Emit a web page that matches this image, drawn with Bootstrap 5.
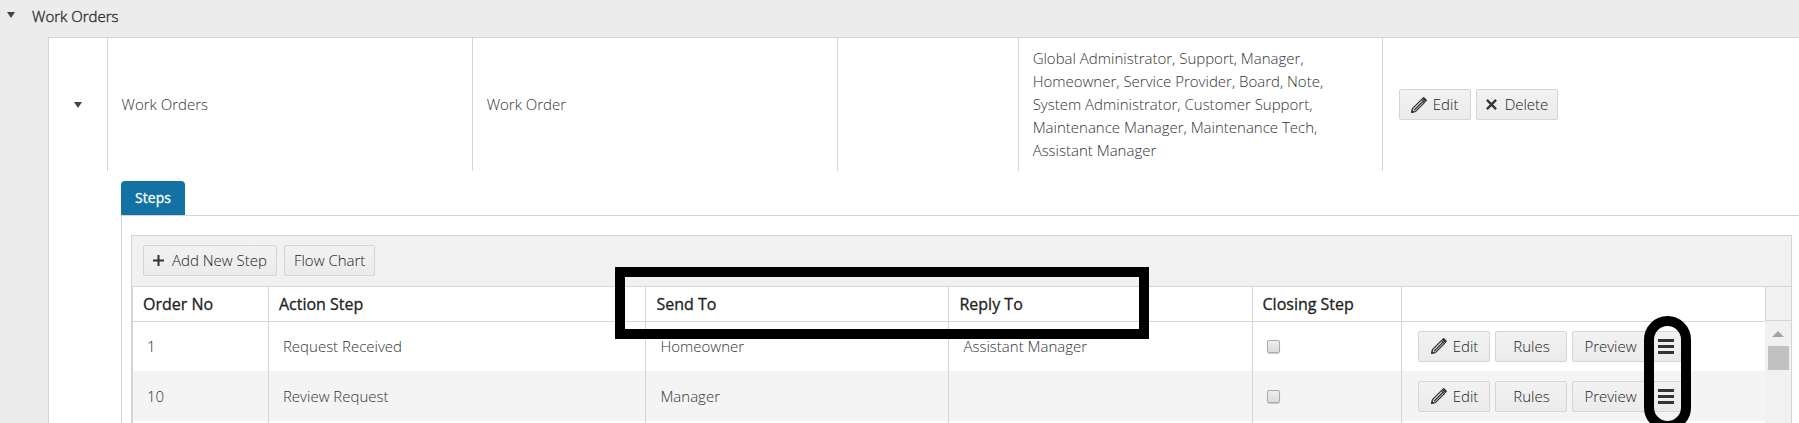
<!DOCTYPE html>
<html lang="en">
<head>
<meta charset="utf-8">
<meta name="viewport" content="width=device-width, initial-scale=1">
<title>Work Orders</title>
<link href="https://cdn.jsdelivr.net/npm/bootstrap@5.3.0/dist/css/bootstrap.min.css" rel="stylesheet">
<style>
  :root { --line: #d5d5d5; }
  body { font-family: "Open Sans", sans-serif; font-size: 15px; font-weight: 300; line-height: 23px; color: #333; background: #ececec; }
  .page-main { height: 100vh; overflow: hidden; }
  .group-bar { height: 37px; flex: none; padding: 5px 0 0 7px; -webkit-text-stroke: .4px; }
  .group-bar .toggle { margin: 7px 17px 0 0; }
  .toggle { width: 8px; height: 6px; color: #444; }
  .outer-panel { margin-left: 48px; flex: 1; background: #fff; border: solid var(--line); border-width: 1px 0 0 1px; }
  table { table-layout: fixed; width: 100%; }
  td + td, th + th { border-left: 1px solid var(--line); }
  .outer-table td { height: 133px; padding: 9px 14px; vertical-align: middle; }
  .outer-table td:last-child { padding-left: 16px; }
  .btn-line { gap: 5px; }
  .tool-btn { --bs-btn-font-size: 15px; --bs-btn-font-weight: 300; --bs-btn-line-height: 21px; --bs-btn-padding-y: 4px; --bs-btn-padding-x: 9px; --bs-btn-border-radius: 2px; --bs-btn-color: #222; --bs-btn-border-color: #d5d5d5; height: 31px; background: linear-gradient(#f2f2f2, #ebebeb); white-space: nowrap; }
  .tool-btn svg { color: #333; flex: none; }
  .w-72 { width: 72px; --bs-btn-padding-x: 4px; }
  .w-76 { width: 76px; --bs-btn-padding-x: 4px; }
  .edit-icon { margin-right: 6px; }
  .steps-area { margin: 10px 0 0 72px; }
  .steps-area .nav-tabs { border: 0; --bs-nav-tabs-border-width: 0; }
  .steps-area .nav-link { width: 64px; height: 34px; padding: 5px 0; text-align: center; font-size: 14px; font-weight: 400; -webkit-text-stroke: .3px; color: #fff; background: #1272a4; border-radius: 4px 4px 0 0; }
  .steps-area .nav-link.active { color: #fff; background: #1272a4; }
  .tab-body { border: solid var(--line); border-width: 1px 0 0 1px; padding: 19px 7px 0 9px; }
  .inner-grid { border: 1px solid var(--line); }
  .toolbar-row { height: 51px; padding: 9px 11px; gap: 7px; background: #f1f1f1; border-bottom: 1px solid var(--line); }
  .table-wrap { border-left: 1px solid var(--line); }
  .step-table th { height: 34px; padding: 2px 10px 0; font-weight: 400; -webkit-text-stroke: .3px; color: #222; font-size: 16px; border-bottom: 1px solid var(--line); }
  .step-table td { height: 50px; padding: 0 14px; vertical-align: middle; }
  .step-table tbody tr:nth-child(even) { background: #f4f4f4; }
  .step-table td.actions { position: relative; padding: 0 16px; }
  .step-table input { appearance: none; display: block; width: 13px; height: 13px; margin: 0; border: 1px solid #aaa; border-radius: 2px; background: linear-gradient(#eee, #dcdcdc); box-shadow: 0 1px 1px #ccc; }
  .scroll-head { height: 34px; background: #f1f1f1; border-bottom: 1px solid var(--line); border-left: 1px solid var(--line); }
  .scroll-track { width: 26px; background: #f1f1f1; flex: none; }
  .scroll-thumb { width: 21px; height: 24px; background: #c1c1c1; }
  .mark-box { position: absolute; left: 29.55%; width: 32.7%; top: -20px; height: 72px; border: 10px solid #000; pointer-events: none; }
  .mark-oval { position: absolute; z-index: 2; left: 242px; top: -6px; width: 47px; height: 115px; border: 10px solid #000; border-radius: 24px; pointer-events: none; }
</style>
</head>
<body>
<svg class="d-none">
  <symbol id="i-down" viewBox="0 0 8 6"><path d="M0 0h8L4 6z" fill="currentColor"/></symbol>
  <symbol id="i-pencil" viewBox="0 0 16 16"><path d="M.6 15.400L1.500 11.500 10.500 2.500l3 3-9 9z" fill="#eee" stroke="currentColor" stroke-width="1.200"/><path d="M3 13.200l9-9" stroke="currentColor" stroke-width="1.300"/><path d="M0 16l.8-3.600 2.800 2.800zM10.600 1.400L12.200.2q.5-.4 1 0l2.500 2.500q.4.500 0 1l-1.300 1.600z" fill="currentColor"/></symbol>
  <symbol id="i-x" viewBox="0 0 12 12"><path d="M1 1l10 10M11 1L1 11" stroke="currentColor" stroke-width="2.500"/></symbol>
  <symbol id="i-plus" viewBox="0 0 12 12"><path d="M6 0v12M0 6h12" stroke="currentColor" stroke-width="2.200"/></symbol>
  <symbol id="i-menu" viewBox="0 0 16 15"><path d="M0 1.500h16M0 7.500h16M0 13.500h16" stroke="currentColor" stroke-width="3"/></symbol>
</svg>
<main class="page-main d-flex flex-column">
  <div class="group-bar d-flex align-items-start">
    <svg class="toggle"><use href="#i-down"/></svg><span>Work Orders</span>
  </div>
  <section class="outer-panel">
    <table class="outer-table">
      <colgroup><col style="width:3.32%"><col style="width:20.86%"><col style="width:20.86%"><col style="width:10.34%"><col style="width:20.8%"><col></colgroup>
      <tbody><tr>
        <td class="text-center"><svg class="toggle d-block mx-auto"><use href="#i-down"/></svg></td>
        <td>Work Orders</td>
        <td>Work Order</td>
        <td></td>
        <td>Global Administrator, Support, Manager, Homeowner, Service Provider, Board, Note, System Administrator, Customer Support, Maintenance Manager, Maintenance Tech, Assistant Manager</td>
        <td><div class="btn-line d-flex">
          <button class="btn tool-btn w-72 d-flex align-items-center justify-content-center" type="button"><svg class="edit-icon" width="16" height="16"><use href="#i-pencil"/></svg>Edit</button>
          <button class="btn tool-btn d-flex align-items-center" type="button"><svg class="me-2" width="11" height="11"><use href="#i-x"/></svg>Delete</button>
        </div></td>
      </tr></tbody>
    </table>
    <div class="steps-area">
      <ul class="nav nav-tabs"><li class="nav-item"><a class="nav-link active" href="#steps">Steps</a></li></ul>
      <div class="tab-body" id="steps">
        <div class="inner-grid">
          <div class="toolbar-row d-flex">
            <button class="btn tool-btn d-flex align-items-center" type="button"><svg class="me-2" width="11" height="11"><use href="#i-plus"/></svg>Add New Step</button>
            <button class="btn tool-btn" type="button">Flow Chart</button>
          </div>
          <div class="table-wrap d-flex">
            <div class="position-relative flex-grow-1">
              <table class="step-table">
                <colgroup><col style="width:8.3%"><col style="width:23.13%"><col style="width:18.57%"><col style="width:18.57%"><col style="width:9.19%"><col></colgroup>
                <thead><tr><th>Order No</th><th>Action Step</th><th>Send To</th><th>Reply To</th><th id="closing">Closing Step</th><th></th></tr></thead>
                <tbody>
                  <tr><td>1</td><td>Request Received</td><td>Homeowner</td><td>Assistant Manager</td><td><input type="checkbox" aria-labelledby="closing"></td>
                    <td class="actions"><div class="btn-line d-flex">
                      <button class="btn tool-btn w-72 d-flex align-items-center justify-content-center" type="button"><svg class="edit-icon" width="16" height="16"><use href="#i-pencil"/></svg>Edit</button>
                      <button class="btn tool-btn w-72" type="button">Rules</button>
                      <div class="d-flex"><button class="btn tool-btn w-76" type="button">Preview</button><button class="btn tool-btn d-flex align-items-center" type="button" aria-label="More"><svg width="16" height="15"><use href="#i-menu"/></svg></button></div>
                    </div><div class="mark-oval"></div></td></tr>
                  <tr><td>10</td><td>Review Request</td><td>Manager</td><td></td><td><input type="checkbox" aria-labelledby="closing"></td>
                    <td class="actions"><div class="btn-line d-flex">
                      <button class="btn tool-btn w-72 d-flex align-items-center justify-content-center" type="button"><svg class="edit-icon" width="16" height="16"><use href="#i-pencil"/></svg>Edit</button>
                      <button class="btn tool-btn w-72" type="button">Rules</button>
                      <div class="d-flex"><button class="btn tool-btn w-76" type="button">Preview</button><button class="btn tool-btn d-flex align-items-center" type="button" aria-label="More"><svg width="16" height="15"><use href="#i-menu"/></svg></button></div>
                    </div></td></tr>
                  <tr><td></td><td></td><td></td><td></td><td></td><td></td></tr>
                </tbody>
              </table>
              <div class="mark-box"></div>
            </div>
            <div class="scroll-track">
              <div class="scroll-head"></div>
              <svg class="d-block mx-auto" width="12" height="25"><path d="M0 16l6-6 6 6z" fill="#a3a3a3"/></svg>
              <div class="scroll-thumb mx-auto"></div>
            </div>
          </div>
        </div>
      </div>
    </div>
  </section>
</main>
<script src="https://cdn.jsdelivr.net/npm/bootstrap@5.3.0/dist/js/bootstrap.bundle.min.js"></script>
</body>
</html>
